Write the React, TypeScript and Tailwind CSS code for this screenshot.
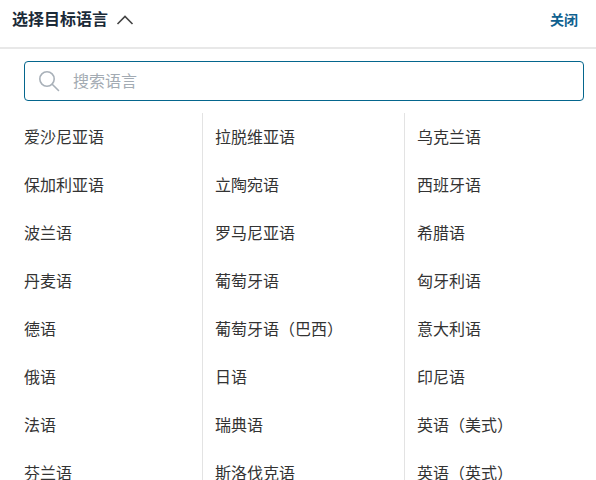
const columns = [
  ["爱沙尼亚语", "保加利亚语", "波兰语", "丹麦语", "德语", "俄语", "法语", "芬兰语"],
  ["拉脱维亚语", "立陶宛语", "罗马尼亚语", "葡萄牙语", "葡萄牙语（巴西）", "日语", "瑞典语", "斯洛伐克语"],
  ["乌克兰语", "西班牙语", "希腊语", "匈牙利语", "意大利语", "印尼语", "英语（美式）", "英语（英式）"],
];

export default function App() {
  return (
    <div className="h-[480px] w-[596px] overflow-hidden bg-white font-['Liberation_Sans','Noto_Sans_CJK_SC',sans-serif] text-[#333]">
      {/* Header */}
      <div className="flex h-[49px] items-center justify-between border-b-2 border-[#e8e8e8] pb-[8px] pl-3 pr-[18px]">
        <div className="flex items-center">
          <span className="text-base font-semibold text-[#1b2a38]">选择目标语言</span>
          <svg className="ml-[8px]" width="18" height="10" viewBox="0 0 18 10" fill="none" stroke="#444" strokeWidth="1.6">
            <path d="M1.5 9 9 1.5 16.5 9" />
          </svg>
        </div>
        <span className="text-sm font-bold text-[#10618f]">关闭</span>
      </div>

      {/* Search */}
      <div className="pl-6 pr-3 pt-3">
        <div className="flex h-10 items-center rounded-[4px] border border-[#05668d] pl-[13px]">
          <svg width="22" height="22" viewBox="0 0 22 22" fill="none" stroke="#a9b1b9" strokeWidth="1.6" strokeLinecap="round">
            <circle cx="9" cy="9" r="7.2" />
            <path d="M14.2 14.2 20.5 20.5" />
          </svg>
          <span className="ml-[13px] pt-[2px] text-base text-[#a3abb3]">搜索语言</span>
        </div>
      </div>

      {/* Language columns */}
      <div className="mt-3 flex text-base">
        {columns.map((items, i) => (
          <div
            key={i}
            className={
              i === 0
                ? "w-[202px] pl-6"
                : i === 1
                  ? "w-[202px] border-l border-[#e3e3e3] pl-3"
                  : "border-l border-[#e3e3e3] pl-3"
            }
          >
            {items.map((name) => (
              <div key={name} className="flex h-12 items-center pt-[2px]">
                {name}
              </div>
            ))}
          </div>
        ))}
      </div>
    </div>
  );
}
